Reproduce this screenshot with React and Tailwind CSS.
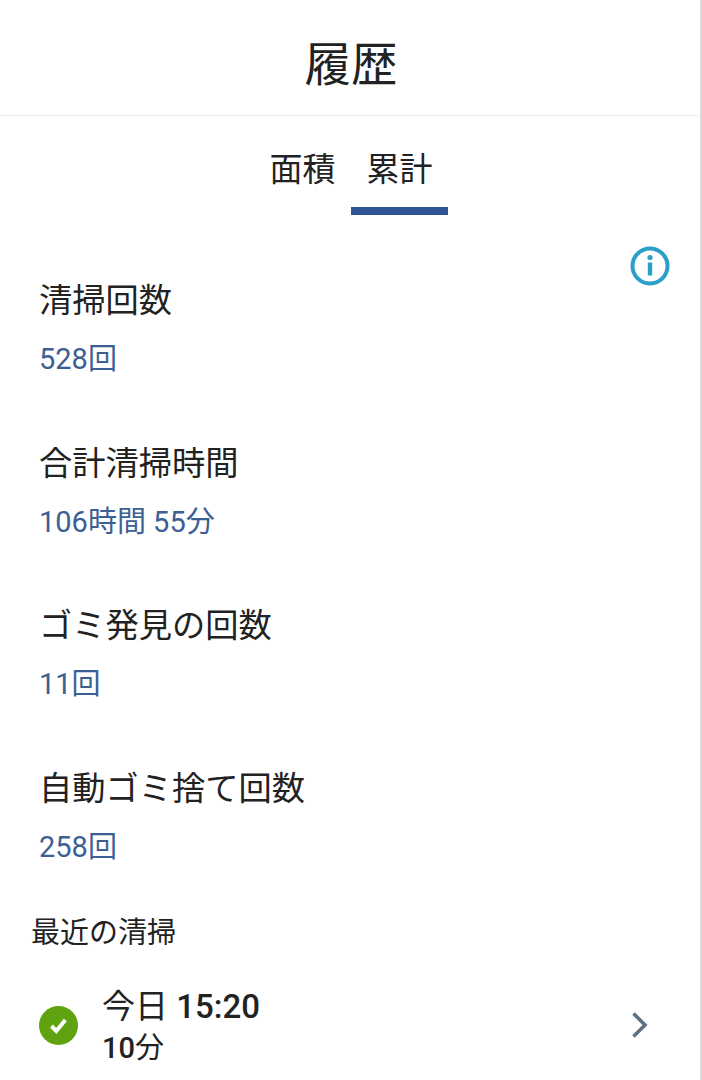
const F = "font-['Roboto','Noto_Sans_CJK_JP','Noto_Sans_CJK_SC',sans-serif]";

const stats = [
  ['清掃回数', '528回'],
  ['合計清掃時間', '106時間 55分'],
  ['ゴミ発見の回数', '11回'],
  ['自動ゴミ捨て回数', '258回'],
];

function InfoIcon() {
  return (
    <svg width="40" height="40" viewBox="0 0 40 40" fill="none">
      <circle cx="20" cy="20" r="17.5" stroke="#2a9fc9" strokeWidth="4" />
      <circle cx="20" cy="11.5" r="2.6" fill="#2a9fc9" />
      <rect x="17.8" y="16.5" width="4.4" height="13" fill="#2a9fc9" />
    </svg>
  );
}

function CheckBadge() {
  return (
    <svg className="mb-[3px] shrink-0" width="39" height="39" viewBox="0 0 39 39">
      <circle cx="19.5" cy="19.5" r="19.5" fill="#5fa310" />
      <path d="M12.5 20l4.8 5 9-11" fill="none" stroke="#fff" strokeWidth="4" />
    </svg>
  );
}

function Chevron() {
  return (
    <svg className="mb-[3px] shrink-0" width="18" height="28" viewBox="0 0 18 28" fill="none">
      <path d="M2.5 2.5L14 14 2.5 25.5" stroke="#5d7183" strokeWidth="3.6" />
    </svg>
  );
}

export default function App() {
  return (
    <div className={`w-[702px] h-[1080px] overflow-hidden bg-white border-r-2 border-[#dcdcdc] text-[#222222] ${F}`}>
      <header className="h-[116px] border-b border-[#eeeeee] flex items-center justify-center pt-[16px] pl-[2px]">
        <h1 className="text-[46.5px] leading-none font-normal">履歴</h1>
      </header>
      <nav className="flex justify-center h-[99px] pl-[2px]">
        <div className="w-[97px] flex justify-center pt-[36px] text-[33px] leading-[36px]">面積</div>
        <div className="w-[97px] flex justify-center pt-[36px] text-[33px] leading-[36px] border-b-8 border-[#2f5599]">累計</div>
      </nav>
      <div className="flex justify-end pr-[30px] pt-[31px] h-[67px]">
        <InfoIcon />
      </div>
      <div className="pl-[39px] flex flex-col gap-[68.5px]">
        {stats.map(([label, value]) => (
          <div key={label} className="flex flex-col gap-[22px]">
            <div className="text-[33.25px] leading-[38px]">{label}</div>
            <div className="text-[29px] leading-[34px] text-[#3c6093]">{value}</div>
          </div>
        ))}
      </div>
      <div className="pl-[31px] pt-[51px] text-[29px] leading-[36px]">最近の清掃</div>
      <div className="flex items-center pl-[39px] pr-[51px] pt-[35px]">
        <CheckBadge />
        <div className="ml-[24px] flex-1">
          <div className="text-[33px] leading-[42px] font-medium"><span className="font-normal">今日</span> 15:20</div>
          <div className="text-[29px] leading-[40px] font-medium">10<span className="font-normal">分</span></div>
        </div>
        <Chevron />
      </div>
    </div>
  );
}
